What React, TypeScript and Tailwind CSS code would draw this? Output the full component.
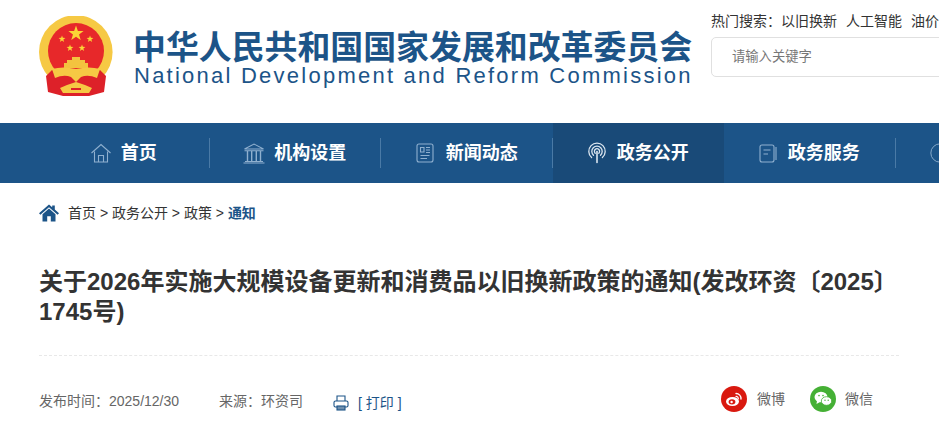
import { Clock } from 'lucide-react'
import type { ReactNode } from 'react'

const FONT = 'font-["Liberation_Sans","Noto_Sans_CJK_SC",sans-serif]'

function HomeIcon() {
  return (
    <svg width="22" height="22" viewBox="0 0 22 22" fill="none" stroke="currentColor" strokeWidth="1.1">
      <path d="M1.5 11 L11 2.5 L20.5 11" />
      <path d="M4.5 9.5 V20 H17.5 V9.5" />
      <path d="M8.5 20 V13.5 H13.5 V20" />
    </svg>
  )
}

function BankIcon() {
  return (
    <svg width="22" height="22" viewBox="0 0 22 22" fill="none" stroke="currentColor" strokeWidth="1.1">
      <path d="M1.5 7 L11 2 L20.5 7 Z" />
      <path d="M1.5 8.8 H20.5 M2 19.5 H20 M0.5 21 H21.5" />
      <path d="M4.5 9 V19 M8.7 9 V19 M13.3 9 V19 M17.5 9 V19" strokeWidth="1.4" />
    </svg>
  )
}

function NewsIcon() {
  return (
    <svg width="20" height="22" viewBox="0 0 20 22" fill="none" stroke="currentColor" strokeWidth="1.1">
      <rect x="2" y="2" width="16" height="18" rx="2" />
      <path d="M5.5 5.5 H9 V10 H5.5 Z M11 5.5 H15 M11 8 H15 M11 10.5 H15 M5.5 13.5 H14.5 M5.5 16.5 H12" />
    </svg>
  )
}

function SignalIcon() {
  return (
    <svg width="20" height="22" viewBox="0 0 20 22" fill="none" stroke="currentColor" strokeWidth="1.3" strokeLinecap="round">
      <path d="M4.6 15.5 A8.2 8.2 0 1 1 15.4 15.5" />
      <path d="M6.5 13.2 A5.2 5.2 0 1 1 13.5 13.2" />
      <path d="M8.2 11.2 A2.6 2.6 0 1 1 11.8 11.2" />
      <path d="M10 9.5 V20.5" strokeWidth="1.6" />
    </svg>
  )
}

function BookIcon() {
  return (
    <svg width="18" height="22" viewBox="0 0 18 22" fill="none" stroke="currentColor" strokeWidth="1.1">
      <rect x="1" y="3" width="14" height="17" rx="2" />
      <path d="M4.5 8 H11.5 M4.5 12 H9 M17 5 V18" />
    </svg>
  )
}

const NAV: { label: string; icon: ReactNode; gap: string; active?: boolean }[] = [
  { label: '首页', icon: <HomeIcon />, gap: 'mr-[9px]' },
  { label: '机构设置', icon: <BankIcon />, gap: 'mr-[9px]' },
  { label: '新闻动态', icon: <NewsIcon />, gap: 'mr-[11px]' },
  { label: '政务公开', icon: <SignalIcon />, gap: 'mr-[10px]', active: true },
  { label: '政务服务', icon: <BookIcon />, gap: 'mr-[11px]' },
]

function star(cx: number, cy: number, r: number, rot = 0) {
  const pts: string[] = []
  for (let i = 0; i < 10; i++) {
    const rad = i % 2 === 0 ? r : r * 0.4
    const a = ((-90 + rot + i * 36) * Math.PI) / 180
    pts.push(`${(cx + rad * Math.cos(a)).toFixed(2)},${(cy + rad * Math.sin(a)).toFixed(2)}`)
  }
  return pts.join(' ')
}

function Emblem() {
  return (
    <svg width="74" height="80" viewBox="0 0 74 80" className="shrink-0">
      <circle cx="36.8" cy="36" r="36.8" fill="#f6c944" />
      <circle cx="37" cy="35" r="28" fill="#e7282a" />
      <polygon points={star(37, 17.5, 8)} fill="#fbd536" />
      <polygon points={star(23, 23, 3.6)} fill="#fbd536" />
      <polygon points={star(51, 23, 3.6)} fill="#fbd536" />
      <polygon points={star(31, 32, 3.6)} fill="#fbd536" />
      <polygon points={star(43, 32, 3.6)} fill="#fbd536" />
      <path d="M25 52 L25 47 L28 47 L28 44 L33 44 L33 41 L41 41 L41 44 L46 44 L46 47 L49 47 L49 52 Z" fill="#f3c33f" />
      <path d="M7 60 L13 54 Q22 59 37 59 Q52 59 61 54 L67 60 L65 76 L50 80 L24 80 L9 76 Z" fill="#dd2129" />
      <path d="M13 53 Q24 50 37 53 Q50 50 61 53 L58 62 Q49 58 42 61 L37 66 L32 61 Q25 58 16 62 Z" fill="#f6c944" />
      <path d="M21 72 L28 69 L37 66 L46 69 L53 72 L50 77 L24 77 Z" fill="#f6c944" />
      <path d="M32 72 H42 V74 H32 Z" fill="#dd2129" />
    </svg>
  )
}

function BreadcrumbHome() {
  return (
    <svg width="20" height="18" viewBox="0 0 20 18" className="mr-[9px] shrink-0" fill="#1c5488">
      <path d="M10 0.5 L13.2 3.3 V1.5 H15.8 V5.6 L20 9.3 L18.6 10.8 L10 3.2 L1.4 10.8 L0 9.3 Z" />
      <path d="M3.5 10.3 L10 4.6 L16.5 10.3 V17.5 H11.8 V12.2 H8.2 V17.5 H3.5 Z" />
    </svg>
  )
}

function PrinterIcon() {
  return (
    <svg width="16" height="16" viewBox="0 0 16 16" fill="none" stroke="#1c5488" strokeWidth="1.1" className="shrink-0">
      <path d="M4 6 V1 H12 V6" />
      <rect x="1" y="6" width="14" height="6" rx="1.5" />
      <rect x="4" y="11" width="8" height="4" fill="#6f8fae" />
    </svg>
  )
}

function WeiboGlyph() {
  return (
    <svg width="18" height="18" viewBox="0 0 18 18">
      <ellipse cx="7.5" cy="11.5" rx="6.5" ry="4.5" fill="#fff" />
      <ellipse cx="7" cy="11.8" rx="3.4" ry="2.6" fill="#d9190f" />
      <circle cx="6.6" cy="12" r="1.2" fill="#fff" />
      <path d="M11 3.5 A5 5 0 0 1 16 9" stroke="#fff" strokeWidth="1.4" fill="none" strokeLinecap="round" />
      <path d="M11 6.3 A2.3 2.3 0 0 1 13.3 8.8" stroke="#fff" strokeWidth="1.2" fill="none" strokeLinecap="round" />
    </svg>
  )
}

function WechatGlyph() {
  return (
    <svg width="20" height="18" viewBox="0 0 20 18">
      <ellipse cx="8" cy="7" rx="6.5" ry="5.3" fill="#fff" />
      <path d="M4 10.5 L3.5 14 L7 12 Z" fill="#fff" />
      <ellipse cx="13.5" cy="11" rx="5.2" ry="4.3" fill="#fff" stroke="#45b035" strokeWidth="0.8" />
      <circle cx="6" cy="5.6" r="0.8" fill="#45b035" />
      <circle cx="10" cy="5.6" r="0.8" fill="#45b035" />
      <circle cx="12" cy="10.2" r="0.7" fill="#45b035" />
      <circle cx="15.2" cy="10.2" r="0.7" fill="#45b035" />
    </svg>
  )
}

export default function App() {
  return (
    <div className={`w-[939px] h-[430px] overflow-hidden bg-white ${FONT}`}>
      <header className="h-[123px] flex pl-[39px] overflow-hidden">
        <div className="pt-[16px]">
          <Emblem />
        </div>
        <div className="ml-[20px] pt-[33px] w-[560px] shrink-0">
          <div className="text-[32.9px] leading-[30px] font-bold text-[#1c5488] whitespace-nowrap">
            中华人民共和国国家发展和改革委员会
          </div>
          <div className="text-[22px] leading-[26px] text-[#1c5488] tracking-[2.24px] whitespace-nowrap ml-[1px]">
            National Development and Reform Commission
          </div>
        </div>
        <div className="ml-[18px] pt-[12px] shrink-0 w-[300px]">
          <div className="text-[14px] leading-[18px] text-[#333] whitespace-nowrap">
            <span>热门搜索：</span>
            <span>以旧换新</span>
            <span className="ml-[9px]">人工智能</span>
            <span className="ml-[9px]">油价</span>
          </div>
          <div className="mt-[7px] h-[40px] border border-[#e0e0e0] rounded-[5px] flex items-center pl-[20px] text-[13.3px] text-[#777]">
            请输入关键字
          </div>
        </div>
      </header>

      <nav className="h-[60px] bg-[#1c5488] flex pl-[38px] text-white overflow-hidden">
        {NAV.map((item) => (
          <div
            key={item.label}
            className={`w-[171.5px] shrink-0 h-full flex items-center justify-center pr-[1px] relative ${item.active ? 'bg-[#194a78]' : ''}`}
          >
            <span className={`flex ${item.active ? 'text-[#dbe6f0]' : 'text-[#8fb0cf]'} ${item.gap}`}>{item.icon}</span>
            <span className="text-[18px] font-bold">{item.label}</span>
            {!item.active && <span className="absolute right-0 top-[15px] h-[30px] w-px bg-[#4a7aa6]" />}
          </div>
        ))}
        <div className="shrink-0 h-full flex items-center pl-[33px] text-[#8fb0cf]">
          <Clock className="w-[22px] h-[22px]" strokeWidth={1} />
        </div>
      </nav>

      <div className="px-[39px] w-[938px]">
        <div className="h-[60px] flex items-center text-[14px] text-[#333]">
          <BreadcrumbHome />
          <span className="whitespace-pre">首页 &gt; 政务公开 &gt; 政策 &gt; </span>
          <span className="font-bold text-[#1c5488]">通知</span>
        </div>
        <h1 className="mt-[24px] text-[24px] leading-[30px] font-bold text-[#333]">
          关于2026年实施大规模设备更新和消费品以旧换新政策的通知(发改环资〔2025〕1745号)
        </h1>
        <div className="mt-[28px] border-t border-dashed border-[#e8e8e8]" />
        <div className="mt-[30px] h-[26px] flex items-center text-[14px] text-[#666]">
          <span className="pt-[4px]">发布时间：2025/12/30</span>
          <span className="ml-[40px] pt-[4px]">来源：环资司</span>
          <span className="ml-[30px] mt-[8px]">
            <PrinterIcon />
          </span>
          <span className="ml-[9px] mt-[8px] text-[#1c5488]">[ 打印 ]</span>
          <div className="ml-auto flex items-center w-[178px]">
            <span className="w-[26px] h-[26px] rounded-full bg-[#d9190f] flex items-center justify-center">
              <WeiboGlyph />
            </span>
            <span className="ml-[10px]">微博</span>
            <span className="ml-[25px] w-[26px] h-[26px] rounded-full bg-[#45b035] flex items-center justify-center">
              <WechatGlyph />
            </span>
            <span className="ml-[9px]">微信</span>
          </div>
        </div>
      </div>
    </div>
  )
}
